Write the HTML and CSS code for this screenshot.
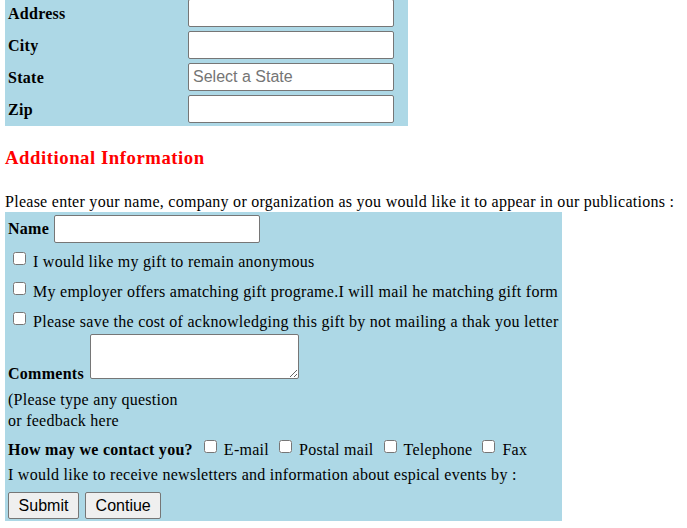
FILE: index.html
```html
<!DOCTYPE html>
<html>
<head>
<meta charset="utf-8">
<link rel="stylesheet" href="styles.css">
</head>
<body>
<div class="page">
  <div class="addr">
    <label class="lbl">Address</label><input class="field" type="text">
    <label class="lbl">City</label><input class="field" type="text">
    <label class="lbl">State</label><input class="field" type="text" placeholder="Select a State">
    <label class="lbl">Zip</label><input class="field" type="text">
  </div>

  <h3 class="section-title">Additional Information</h3>

  <p class="intro">Please enter your name, company or organization as you would like it to appear in our publications :</p>

  <div class="info">
    <div class="name-row"><b>Name</b><input class="field" type="text"></div>
    <div class="cb-list">
      <label class="cb-row"><input type="checkbox" class="cb"><span>I would like my gift to remain anonymous</span></label>
      <label class="cb-row"><input type="checkbox" class="cb"><span>My employer offers amatching gift programe.I will mail he matching gift form</span></label>
      <label class="cb-row"><input type="checkbox" class="cb"><span>Please save the cost of acknowledging this gift by not mailing a thak you letter</span></label>
    </div>
    <div class="comments-row"><b>Comments</b> <textarea class="comments"></textarea></div>
    <div class="note">(Please type any question<br>or feedback here</div>
    <div class="contact-row">
      <b class="contact-label">How may we contact you?</b>
      <label class="opt"><input type="checkbox" class="cb"><span>E-mail</span></label>
      <label class="opt"><input type="checkbox" class="cb"><span>Postal mail</span></label>
      <label class="opt"><input type="checkbox" class="cb"><span>Telephone</span></label>
      <label class="opt"><input type="checkbox" class="cb"><span>Fax</span></label>
    </div>
    <div class="news-row">I would like to receive newsletters and information about espical events by :</div>
    <div class="buttons">
      <button class="btn" type="button">Submit</button>
      <button class="btn" type="button">Contiue</button>
    </div>
  </div>
</div>
</body>
</html>
```

FILE: styles.css
```css
html, body {
  margin: 0;
  padding: 0;
  background: #ffffff;
}

body {
  font-family: "Liberation Serif", "Times New Roman", serif;
  font-size: 16px;
  letter-spacing: 0.27px;
  color: #000000;
}

.page {
  padding: 0 5px;
}

/* address block */
.addr {
  margin-top: -4px;
  width: 403px;
  box-sizing: border-box;
  background: #add8e6;
  padding: 3px 14px 3px 3px;
  display: grid;
  grid-template-columns: 176px 206px;
  grid-auto-rows: 28px;
  column-gap: 4px;
  row-gap: 4px;
  align-items: center;
}

.lbl {
  font-weight: bold;
  padding-top: 2px;
}

.field {
  box-sizing: border-box;
  width: 206px;
  height: 28px;
  margin: 0;
  padding: 0 4px;
  border: 1px solid #767676;
  border-radius: 2px;
  background: #ffffff;
  font-family: "Liberation Sans", Arial, sans-serif;
  font-size: 16px;
  letter-spacing: 0;
  color: #000000;
}

.field::placeholder {
  color: #757575;
}

.section-title {
  margin: 21px 0 0 0;
  font-size: 18.72px;
  font-weight: bold;
  letter-spacing: 0.55px;
  color: #ff0000;
}

.intro {
  margin: 24px 0 0 0;
}

/* information box */
.info {
  margin-top: 1px;
  width: 557px;
  box-sizing: border-box;
  background: #add8e6;
  padding: 3px 3px 2px 3px;
}

.name-row {
  display: flex;
  align-items: center;
  gap: 5px;
  height: 28px;
}

.cb-list {
  margin-top: 1px;
  padding-left: 1px;
}

.cb-row {
  display: flex;
  align-items: flex-start;
  padding-top: 6px;
  line-height: 24px;
}

.cb {
  flex: none;
  width: 13px;
  height: 13px;
  margin: 2px 3px 0 4px;
}

.cb-row span,
.opt span {
  padding-left: 4px;
}

.comments-row {
  line-height: normal;
}

.comments {
  box-sizing: border-box;
  width: 209px;
  height: 45px;
  margin: 0 0 0 2px;
  vertical-align: baseline;
  border: 1px solid #767676;
  border-radius: 2px;
  background: #ffffff;
}

.note {
  margin-top: 6px;
  line-height: 21px;
}

.contact-row {
  margin-top: 7px;
  display: flex;
  align-items: flex-start;
  line-height: 24px;
  gap: 6px;
}

.contact-label {
  margin-right: 1px;
}

.opt {
  display: flex;
  align-items: flex-start;
}

.news-row {
  margin-top: 1px;
  line-height: 24px;
}

.buttons {
  margin-top: 5px;
  display: flex;
  gap: 6px;
}

.btn {
  height: 27px;
  margin: 0;
  padding: 0 9.6px;
  border: 1px solid #767676;
  border-radius: 2px;
  background: #efefef;
  font-family: "Liberation Sans", Arial, sans-serif;
  font-size: 16px;
  letter-spacing: 0;
  color: #000000;
}
```
